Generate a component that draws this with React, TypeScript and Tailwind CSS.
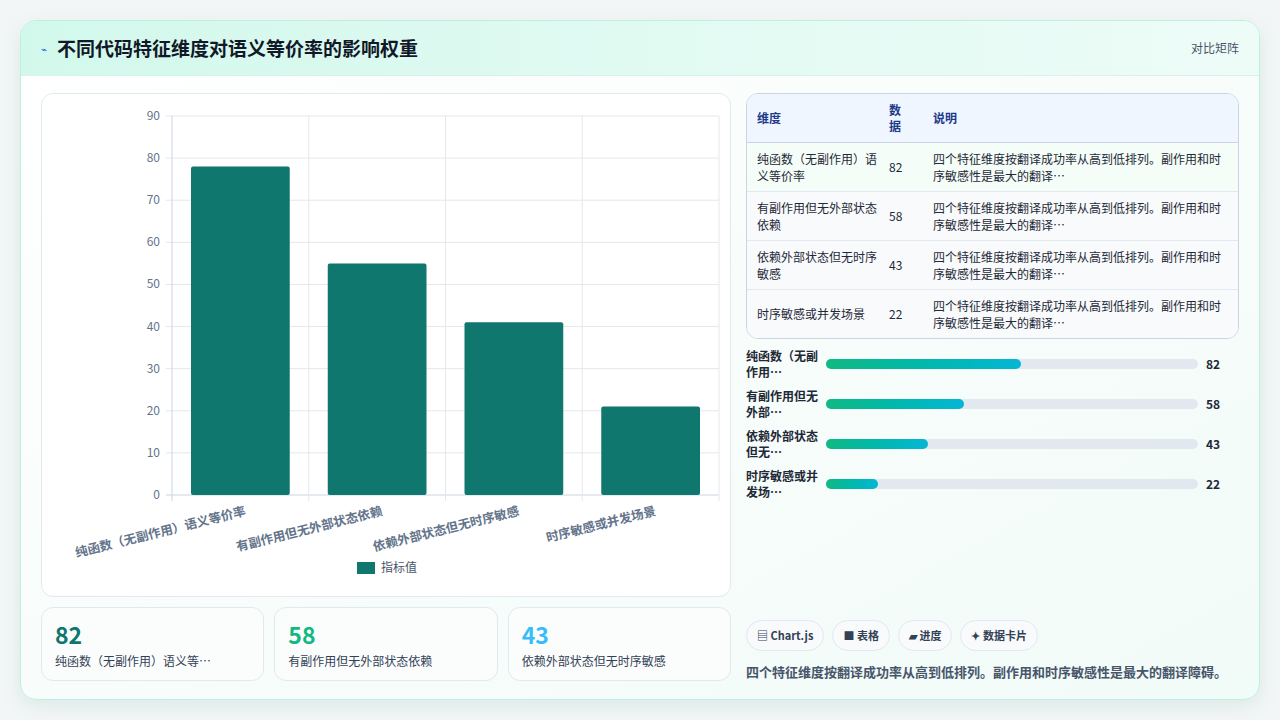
import React from "react";

const rows = [
  { name: "纯函数（无副作用）语义等价率", short: "纯函数（无副作用…", bar: "纯函数（无副\n作用…", v: 82 },
  { name: "有副作用但无外部状态依赖", short: "有副作用但无外部…", bar: "有副作用但无\n外部…", v: 58 },
  { name: "依赖外部状态但无时序敏感", short: "依赖外部状态…", bar: "依赖外部状态\n但无…", v: 43 },
  { name: "时序敏感或并发场景", short: "时序敏感或并发场景", bar: "时序敏感或并\n发场…", v: 22 },
];
const chartVals = [78, 55, 41, 21];
const desc = "四个特征维度按翻译成功率从高到低排列。副作用和时序敏感性是最大的翻译…";
const font = { fontFamily: '"Noto Sans CJK SC", "Noto Sans", sans-serif' };

function Chart() {
  const x0 = 130, x1 = 677, yTop = 22, yBot = 401;
  const step = (yBot - yTop) / 9;
  const cw = (x1 - x0) / 4;
  return (
    <svg width="690" height="503" className="block">
      {Array.from({ length: 10 }).map((_, i) => {
        const y = yBot - i * step;
        return (
          <g key={i}>
            <line x1={x0 - 6} x2={x1} y1={y} y2={y} stroke={i === 0 ? "#cbd5e1" : "#e5e7eb"} />
            <text x={x0 - 12} y={y + 4} textAnchor="end" fontSize="12" fill="#64748b">{i * 10}</text>
          </g>
        );
      })}
      {[0, 1, 2, 3, 4].map((i) => (
        <line key={i} x1={x0 + i * cw} x2={x0 + i * cw} y1={yTop} y2={yBot + 6} stroke={i === 0 ? "#cbd5e1" : "#e5e7eb"} />
      ))}
      {chartVals.map((v, i) => {
        const h = (v / 90) * (yBot - yTop);
        return <rect key={i} x={x0 + i * cw + 19} y={yBot - h} width={cw - 38} height={h} rx="2" fill="#10776f" />;
      })}
      {rows.map((r, i) => (
        <text key={i} x={x0 + i * cw + cw / 2 + 6} y={yBot + 20} textAnchor="end" fontSize="12.5" fontWeight="600" fill="#64748b"
          transform={`rotate(-14 ${x0 + i * cw + cw / 2 + 6} ${yBot + 20})`}>{r.name}</text>
      ))}
      <rect x="315" y="468" width="18" height="12" fill="#10776f" />
      <text x="339" y="478" fontSize="12" fill="#475569">指标值</text>
    </svg>
  );
}

export default function App() {
  return (
    <div className="flex h-[720px] w-[1280px] bg-[#f3f6f6] p-5" style={font}>
      <div className="flex flex-1 flex-col overflow-hidden rounded-2xl border border-[#bfeee2] bg-gradient-to-br from-white to-[#f1fbf8] shadow-[0_6px_20px_rgba(15,118,110,0.10)]">
        <div className="flex h-[55px] items-center justify-between border-b border-[#d8f3ec] bg-gradient-to-r from-[#d2f8ec] to-[#eefcf8] pl-5 pr-5">
          <div className="flex items-center gap-2.5">
            <span className="text-[10px] text-[#2563eb]">⌁</span>
            <h1 className="text-[19px] font-bold text-[#111827]">不同代码特征维度对语义等价率的影响权重</h1>
          </div>
          <span className="text-[12px] text-[#475569]">对比矩阵</span>
        </div>
        <div className="flex flex-1 gap-[15px] px-5 pt-[17px] pb-[18px]">
          <div className="flex w-[690px] flex-col gap-[10px]">
            <div className="h-[504px] rounded-xl border border-[#e2e8f0] bg-white">
              <Chart />
            </div>
            <div className="grid grid-cols-3 gap-[10px]">
              {[
                ["82", "#0f766e", "纯函数（无副作用）语义等…"],
                ["58", "#10b981", "有副作用但无外部状态依赖"],
                ["43", "#38bdf8", "依赖外部状态但无时序敏感"],
              ].map(([n, c, t]) => (
                <div key={n} className="h-[74px] rounded-xl border border-[#e2e8f0] bg-[#fbfdfd] px-[13px] pt-[12px]">
                  <div className="text-[23px] font-bold leading-7" style={{ color: c }}>{n}</div>
                  <div className="mt-1 text-[12px] text-[#334155]">{t}</div>
                </div>
              ))}
            </div>
          </div>
          <div className="flex flex-1 flex-col">
            <div className="overflow-hidden rounded-xl border border-[#cbd5e1] bg-white">
              <table className="w-full text-[12px]">
                <thead className="bg-[#eff6ff] text-[#1e3a8a]">
                  <tr className="h-[48px] border-b border-[#cbd5e1]">
                    <th className="w-[140px] px-2.5 text-left font-semibold">维度</th>
                    <th className="w-[40px] px-0.5 text-left font-semibold leading-4">数<br />据</th>
                    <th className="px-1.5 text-left font-semibold">说明</th>
                  </tr>
                </thead>
                <tbody className="text-[#1f2937]">
                  {rows.map((r, i) => (
                    <tr key={i} className={`h-[49px] border-b border-[#e2e8f0] last:border-0 ${i === 0 ? "bg-[#f4fdf8]" : "bg-[#f8fafc]"}`}>
                      <td className="px-2.5 leading-[17px]">{r.name}</td>
                      <td className="px-0.5">{r.v}</td>
                      <td className="px-1.5 pr-3 leading-[17px]">{desc}</td>
                    </tr>
                  ))}
                </tbody>
              </table>
            </div>
            <div className="mt-[10px] flex flex-col gap-[10px]">
              {rows.map((r, i) => (
                <div key={i} className="flex h-[30px] items-center">
                  <div className="w-[80px] whitespace-pre-line text-[12px] font-semibold leading-[16px] text-[#1f2937]">{r.bar}</div>
                  <div className="h-[10px] w-[372px] rounded-full bg-[#e2e8f0]">
                    <div className="h-full rounded-full bg-gradient-to-r from-[#10b981] to-[#06b6d4]" style={{ width: `${(r.v / 156.5) * 100}%` }} />
                  </div>
                  <div className="ml-2 text-[12px] font-semibold text-[#1f2937]">{r.v}</div>
                </div>
              ))}
            </div>
            <div className="mt-auto flex gap-2">
              {["▤ Chart.js", "■ 表格", "▰ 进度", "✦ 数据卡片"].map((c) => (
                <span key={c} className="rounded-full border border-[#e2e8f0] bg-[#f8fafc] px-2.5 py-[6px] text-[11px] font-semibold text-[#334155]">{c}</span>
              ))}
            </div>
            <p className="mt-[11px] text-[13px] font-semibold text-[#475569]">四个特征维度按翻译成功率从高到低排列。副作用和时序敏感性是最大的翻译障碍。</p>
          </div>
        </div>
      </div>
    </div>
  );
}
